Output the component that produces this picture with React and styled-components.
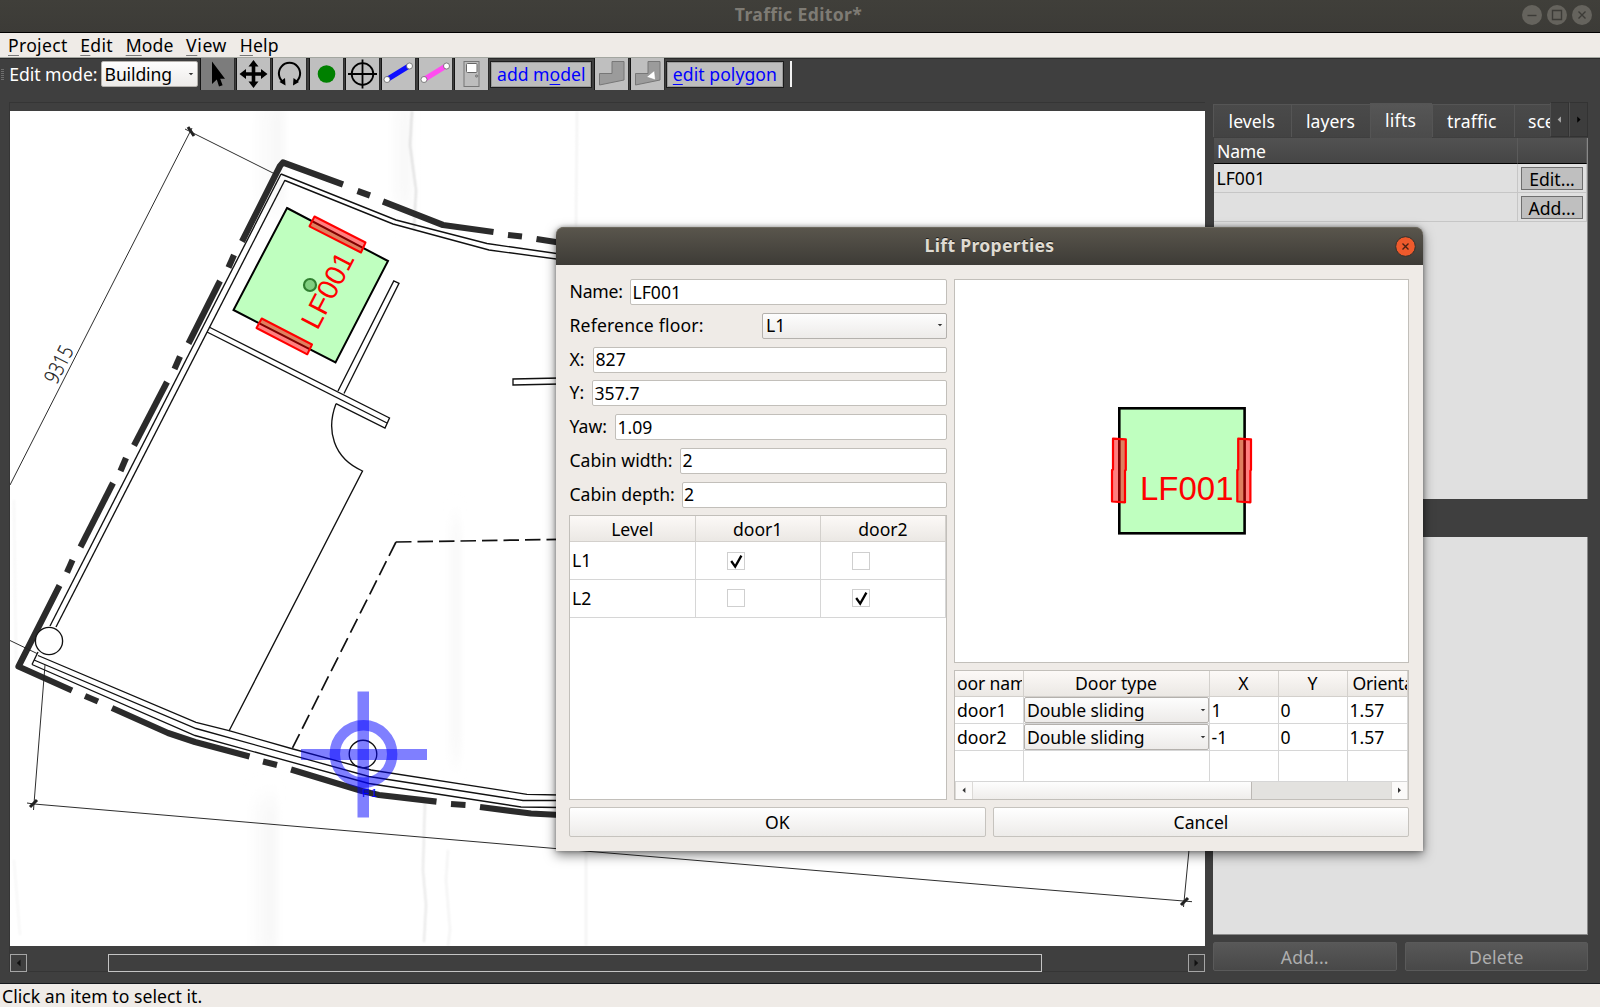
import React from "react";
import styled, { createGlobalStyle, css } from "styled-components";

const Global = createGlobalStyle`
  * { box-sizing: border-box; }
  body { margin: 0; overflow: hidden; }
`;

const Window = styled.div`
  position: relative;
  width: 1600px;
  height: 1007px;
  display: flex;
  flex-direction: column;
  overflow: hidden;
  background: #3f3f3f;
  color: #000;
  font-family: "Noto Sans", "Open Sans", sans-serif;
  font-size: 17.6px;
  line-height: 24px;
  white-space: nowrap;
`;

/* ---------- window chrome ---------- */

const TitleBar = styled.header`
  height: 33px;
  flex: none;
  display: grid;
  grid-template-columns: 1fr auto 1fr;
  align-items: start;
  padding: 2px 8px 0 5px;
  background: linear-gradient(#403f3a, #3c3b37);
  border-bottom: 1px solid #000;
`;

const TitleText = styled.h1`
  grid-column: 2;
  margin: 0;
  font-size: 17.6px;
  line-height: 24px;
  font-weight: 700;
  letter-spacing: 0.35px;
  color: #7e7b74;
`;

const WindowButtons = styled.div`
  justify-self: end;
  display: flex;
  gap: 5px;
  padding-top: 2.5px;
`;

const MenuBar = styled.nav`
  height: 25px;
  flex: none;
  display: flex;
  gap: 12.7px;
  padding-left: 8px;
  background: #efebe7;
  border-bottom: 1px solid #a3a6a0;
`;

const MenuItem = styled.span`
  letter-spacing: ${(p) => p.$track || 0}px;
`;

const Mnemonic = styled.span`
  text-decoration: underline;
  text-decoration-thickness: 1px;
  text-underline-offset: 3px;
  text-decoration-color: ${(p) => p.$color || "#777"};
`;

/* ---------- toolbar ---------- */

const Toolbar = styled.div`
  height: 44px;
  flex: none;
  display: flex;
  align-items: flex-start;
  gap: 3.3px;
  padding-left: 2px;
  box-shadow: inset 0 1px 0 #2a2a2a;
`;

const Grip = styled.span`
  width: 3px;
  height: 12px;
  margin: 11px 2px 0 -1px;
  background: repeating-linear-gradient(#6e6e6e 0 1px, #3f3f3f 1px 2px);
`;

const ToolLabel = styled.span`
  width: 88px;
  padding-top: 4px;
  color: #fff;
  letter-spacing: -0.05px;
`;

const comboFace = css`
  display: flex;
  align-items: center;
  justify-content: space-between;
  border: 1px solid #b4b1ad;
  border-radius: 2px;
  background: linear-gradient(#fdfdfd, #edebe9);
`;

const Combo = styled.div`
  ${comboFace}
  width: ${(p) => p.$w}px;
  height: 26px;
  padding: 0 ${(p) => p.$pr || 3}px 1px ${(p) => p.$pl || 3}px;
  margin-top: ${(p) => p.$mt || 0}px;
  letter-spacing: ${(p) => p.$track || 0}px;
`;

const ToolButton = styled.button`
  width: 33px;
  height: 32px;
  flex: none;
  padding: 0;
  border: 0;
  display: block;
  background: ${(p) => (p.$active ? "#7c7c7c" : "#bfbfbf")};
  box-shadow: -1px 0 0 #151515, 1px 0 0 #2b2b2b;
`;

const TextTool = styled.button`
  width: ${(p) => p.$w}px;
  height: 25px;
  flex: none;
  margin: 4px 0 0;
  padding: 0;
  border: 1px solid #9a9a9a;
  background: #bdbdbd;
  box-shadow: 0 0 0 1px #1c1c1c;
  color: #0000ff;
  font: inherit;
  line-height: 21px;
  letter-spacing: ${(p) => p.$track || 0}px;
`;

const ToolSeparator = styled.span`
  width: 2px;
  height: 26px;
  margin: 3px 0 0 4px;
  background: #f2f2f2;
`;

/* ---------- workspace ---------- */

const Workspace = styled.main`
  height: 881px;
  flex: none;
  display: flex;
  gap: 8px;
  padding: 0 12px 0 9px;
`;

const CanvasPane = styled.section`
  width: 1196px;
  height: 870px;
  display: flex;
  flex-direction: column;
  border: 1px solid #353535;
  border-right: 0;
  padding-top: 8px;
`;

const PlanView = styled.div`
  width: 1195px;
  height: 835px;
  flex: none;
  background: #fff;
  svg { display: block; }
`;

const CanvasScroll = styled.div`
  display: flex;
  width: 1194.5px;
  height: 18px;
  margin-top: 7.5px;
`;

const ScrollArrow = styled.span`
  width: 17px;
  height: 18px;
  display: grid;
  place-items: center;
  border: 1px solid #a5a5a5;
`;

const ScrollThumb = styled.span`
  width: 934px;
  margin: 0 auto 0 81px;
  border: 1px solid #c4c4c4;
`;

const SidePane = styled.aside`
  width: 375px;
  height: 870px;
  display: flex;
  flex-direction: column;
`;

const Tabs = styled.div`
  height: 36px;
  display: flex;
  align-items: flex-end;
  overflow: hidden;
`;

const Tab = styled.span`
  width: ${(p) => p.$w}px;
  height: ${(p) => (p.$active ? 35 : 33)}px;
  flex: none;
  overflow: hidden;
  margin-bottom: ${(p) => (p.$active ? 0 : 1)}px;
  padding: 3.5px 0 0 ${(p) => p.$pl || 14}px;
  color: #fff;
  background: ${(p) => (p.$active ? "linear-gradient(#565656,#4b4b4b)" : "linear-gradient(#4a4a4a,#434343)")};
  border: 1px solid #555;
  border-width: 1px 0 0 1px;
  letter-spacing: ${(p) => p.$track || 0}px;
`;

const TabScroll = styled.span`
  width: 19px;
  height: 35px;
  display: grid;
  place-items: center;
  margin-bottom: 1px;
  background: #3d3d3d;
  border: 1px solid #333;
  border-left-color: #505050;
`;

const LiftTable = styled.div`
  height: 361px;
  display: grid;
  grid-template-columns: 304px 69px;
  grid-template-rows: 26px 29px 29px;
  margin-left: 1px;
  background: #e0e0e0;
  border-right: 1px solid #888;
`;

const LiftHead = styled.div`
  padding: 0.6px 0 0 3px;
  color: #fff;
  background: linear-gradient(#525252, #454545);
  border-bottom: 1px solid #000;
  border-right: 1px solid #5b5b5b;
  letter-spacing: -0.2px;
`;

const LiftCell = styled.div`
  padding: 2px 0 0 ${(p) => p.$pl ?? 2.5}px;
  border: 1px solid #c6c6c6;
  border-width: 0 1px 1px 0;
`;

const CellButton = styled.button`
  display: block;
  width: 62px;
  height: 23px;
  margin: 1px 0 0 0;
  padding: 0;
  border: 1px solid #6f6f6f;
  background: #bfbfbf;
  font: inherit;
  line-height: 20px;
`;

const EmptyList = styled.div`
  height: 398px;
  margin-top: 38px;
  background: #e0e0e0;
  border: 1px solid #8a8a8a;
  border-width: 0 1px 1px 0;
`;

const SideActions = styled.div`
  display: grid;
  grid-template-columns: 1fr 1fr;
  gap: 8px;
  margin-top: 7px;
`;

const SideButton = styled.button`
  height: 29px;
  padding: 0;
  border: 1px solid #5a5a5a;
  border-radius: 2px;
  background: linear-gradient(#585858, #484848);
  color: #aeaeae;
  font: inherit;
  line-height: 26px;
  letter-spacing: 0.15px;
`;

const StatusBar = styled.footer`
  flex: 1;
  padding-left: 2px;
  background: #efebe7;
  border-top: 1px solid #15181c;
  line-height: 24px;
  letter-spacing: 0.04px;
`;

/* ---------- dialog ---------- */

const Dialog = styled.section`
  position: absolute;
  left: 556px;
  top: 227px;
  width: 867px;
  height: 624px;
  border-radius: 8px 8px 0 0;
  background: #efebe7;
  box-shadow: 0 4px 12px rgba(0, 0, 0, 0.5), 0 0 4px rgba(0, 0, 0, 0.35);
  display: flex;
  flex-direction: column;
`;

const DialogTitle = styled.header`
  height: 38px;
  flex: none;
  display: grid;
  grid-template-columns: 1fr auto 1fr;
  align-items: center;
  padding-right: 7.5px;
  border-radius: 8px 8px 0 0;
  background: linear-gradient(#5a564d, #3d3b36);
  box-shadow: inset 0 1px 0 #6c685d;

  h2 {
    grid-column: 2;
    margin: 0 0 2px 7.5px;
    font-size: 17.6px;
    font-weight: 700;
    letter-spacing: 0.3px;
    color: #dfdbd2;
    text-shadow: 0 -1px 0 #22211e;
  }
  svg { justify-self: end; }
`;

const DialogBody = styled.div`
  display: grid;
  grid-template-columns: 378px 455px;
  column-gap: 7px;
  padding: 14px 0 0 13px;
`;

const Form = styled.div`
  height: 521px;
  display: flex;
  flex-direction: column;
`;

const Field = styled.label`
  height: 26px;
  flex: none;
  margin-bottom: 7.8px;
  display: flex;
  justify-content: space-between;
`;

const FieldLabel = styled.span`
  padding-left: 0.5px;
  letter-spacing: ${(p) => p.$track || 0}px;
`;

const TextBox = styled.input`
  width: ${(p) => p.$w}px;
  height: 26px;
  padding: 0 0 1px 1.5px;
  border: 1px solid #c2bfba;
  border-radius: 2px;
  background: #fff;
  color: #000;
  font: inherit;
  outline: 0;
`;

const frame = css`
  border: 1px solid #c2bfba;
  background: #fff;
`;

const LevelTable = styled.div`
  ${frame}
  flex: 1;
  margin-top: -0.8px;
  display: grid;
  grid-template-columns: 125.5px 125.3px 1fr;
  grid-template-rows: 26.5px 37.5px 38px;
`;

const Head = styled.div`
  overflow: hidden;
  text-align: ${(p) => p.$align || "center"};
  padding: ${(p) => p.$pt || 0}px 0 0 ${(p) => p.$pl || 0}px;
  background: linear-gradient(#fcf9f7, #ebe8e4);
  border: 1px solid #d3d0cc;
  border-width: 0 1px 1px 0;
  letter-spacing: ${(p) => p.$track || 0}px;
`;

const HeadClip = styled.span`
  display: block;
  width: ${(p) => p.$w}px;
  overflow: hidden;
`;

const Cell = styled.div`
  overflow: hidden;
  padding: ${(p) => p.$pt || 0}px 0 0 ${(p) => p.$pl ?? 2}px;
  border: 1px solid #d6d6d6;
  border-width: 0 1px 1px 0;
  letter-spacing: ${(p) => p.$track || 0}px;
`;

const Check = styled.span`
  display: block;
  width: 18px;
  height: 18px;
  border: 1px solid #cfcfcf;
  background: #fff;
  svg { display: block; }
`;

const RightColumn = styled.div`
  display: flex;
  flex-direction: column;
  gap: 7px;
`;

const Preview = styled.div`
  ${frame}
  height: 384px;
  svg { display: block; }
`;

const DoorPanel = styled.div`
  ${frame}
  height: 130px;
  overflow: hidden;
`;

const DoorTable = styled.div`
  display: grid;
  width: 453px;
  grid-template-columns: 68.5px 186px 69px 69px 60.5px;
  grid-template-rows: 26px 27px 27px 31px;
`;

const DoorScroll = styled.div`
  height: 17px;
  display: flex;
  background: #e3e2df;
`;

const DoorArrow = styled.span`
  width: 17.5px;
  display: grid;
  place-items: center;
  background: #fbfaf9;
  border: solid #dcdad7;
  border-width: 0 1px;
`;

const DoorThumb = styled.span`
  width: 279px;
  margin-right: auto;
  background: linear-gradient(#fdfdfd, #efedeb);
  border-right: 1px solid #bbb8b4;
`;

const DialogActions = styled.div`
  display: grid;
  grid-template-columns: 416.5px 416px;
  gap: 7.5px;
  padding: 7px 0 0 13px;
`;

const DialogButton = styled.button`
  height: 30px;
  padding: 0;
  border: 1px solid #c6c3be;
  border-radius: 2px;
  background: linear-gradient(#fff, #edebe9);
  font: inherit;
  line-height: 27px;
`;

/* ---------- drawings ---------- */

const Arrow = ({ dir, color = "#111", s = 1 }) => (
  <svg width={8 * s} height={8 * s} viewBox="0 0 8 8">
    <path
      fill={color}
      d={dir === "left" ? "M5.5 0.5v7L1.8 4z" : dir === "right" ? "M2.5 0.5v7L6.2 4z" : "M1 2.6h6L4 5.6z"}
    />
  </svg>
);

const ChromeButton = ({ children }) => (
  <svg width="20" height="20" viewBox="0 0 20 20">
    <circle cx="10" cy="10" r="10" fill="#65635d" />
    <g fill="none" stroke="#3c3b37" strokeWidth="1.4">{children}</g>
  </svg>
);

const Tool = ({ children, active }) => (
  <ToolButton $active={active}>
    <svg width="33" height="32" viewBox="0 0 33 32">{children}</svg>
  </ToolButton>
);

const Edge = ({ color }) => (
  <>
    <path d="M5 21.5L27 8" stroke={color} strokeWidth="5" />
    <circle cx="5" cy="21.5" r="3" fill="#fff" stroke="#555" strokeWidth=".7" />
    <circle cx="27.5" cy="8" r="3" fill="#fff" stroke="#555" strokeWidth=".7" />
  </>
);

const CheckBox = ({ on }) => (
  <Check>
    {on && (
      <svg width="16" height="16" viewBox="0 0 16 16">
        <path d="M3.2 8L7.2 13.6L13.4 2.6" fill="none" stroke="#000" strokeWidth="2.3" />
      </svg>
    )}
  </Check>
);

const heavyWalls = [
  "M343 184.5L283 162.5L280 166L242 241.5",
  "M357.5 191L370 195.5",
  "M383 201.5L443 225L493.5 232",
  "M508 235L522 236.5",
  "M536.5 239L562 243",
  "M234 255L228.5 267.5",
  "M220 281L188.5 343.5",
  "M180 356.5L174.5 369",
  "M167 382L134 445.5",
  "M126 458L120.5 471",
  "M113 483L80.5 547",
  "M72.5 560L67 572.5",
  "M59.5 585.5L18.5 666.5L72 690.5",
  "M85 696L98 701.5",
  "M112 708L168 733L195 742L249.5 756.5",
  "M263 761.5L277 765",
  "M291 769.5L362 791L379 795L436.5 801.7",
  "M451 804L465.5 805",
  "M480 807L531 813.5L560 815",
];

const thinWalls = [
  "M281 174L396 220L487 243.5L560 254",
  "M285 180.5L393 224L489 250L560 259.5",
  "M281 174L50 626",
  "M285 180L56 627",
  "M209 327L389.5 418L385 428L336 403.7",
  "M207 332L387 423",
  "M338 391L393.8 281L399 283.3L344 393.5",
  "M336 403.7C326 430 333 458 362.5 471L229 731",
  "M560 378L513 379V385L560 384",
  "M38 655.5L196 722.3L229 730.7L293 749L371 770L527 794.3L560 795",
  "M34 660L196 728.5L369 776.5L523 800.5L560 800.5",
  "M32 664.5L195 735.5L369 783.5L521 807L560 807.5",
  "M32 664.5L38 652",
];

const FloorPlan = () => (
  <svg width="1195" height="835" viewBox="10 111 1195 835">
    <defs>
      <linearGradient id="fold">
        <stop offset="0" stopColor="#f6f6f6" stopOpacity="0" />
        <stop offset=".8" stopColor="#f7f7f7" />
        <stop offset="1" stopColor="#f9f9f9" stopOpacity="0" />
      </linearGradient>
      <filter id="soft"><feGaussianBlur stdDeviation="1.1" /></filter>
      <filter id="wide" x="-50%" width="200%"><feGaussianBlur stdDeviation="3 12" /></filter>
    </defs>
    <g filter="url(#wide)">
      <rect x="250" y="100" width="38" height="110" fill="url(#fold)" />
      <rect x="245" y="800" width="36" height="160" fill="url(#fold)" />
      <rect x="446" y="520" width="16" height="240" fill="url(#fold)" />
      <rect x="385" y="100" width="29" height="110" fill="url(#fold)" />
    </g>
    <g fill="none" stroke="#dcdcdc" strokeWidth="1.4" filter="url(#soft)">
      <path d="M412 111L410 145L416 190L414 230" stroke="#cfcfcf" />
      <path d="M425 800L423 870L426 905L424 942" />
      <path d="M448 850L446 880L450 930L448 946" stroke="#ececec" />
      <path d="M577 111L576 226M586 850V946" stroke="#ececec" />
      <path d="M14 500L16 660M14 860L20 935" stroke="#f2f2f2" />
    </g>

    <g fill="none" stroke="#2b2b2b" strokeWidth="6.2" strokeLinejoin="round">
      {heavyWalls.map((d) => <path key={d} d={d} />)}
    </g>
    <g fill="none" stroke="#111" strokeWidth="1.35">
      {thinWalls.map((d) => <path key={d} d={d} />)}
      <path d="M396 542L560 539.4" strokeWidth="1.7" strokeDasharray="15.5 6" />
      <path d="M396 542L292 749" strokeWidth="1.7" strokeDasharray="15.5 6" />
      <circle cx="49" cy="641" r="13.6" fill="#fff" />
      <circle cx="363" cy="754" r="13.8" />
    </g>
    <g fill="none" stroke="#222" strokeWidth=".95">
      <path d="M275 174L185 129M192 128L10 485" />
      <path d="M10 640.5L37 653.5M45 665L33.5 810" />
      <path d="M27 803L34 804L555 848.5L1000 886L1192 901.7M1189 850L1183.5 907" />
      <path d="M188 127L194 136M30 807L37 800M1181 905L1188 898" strokeWidth="3" />
    </g>
    <text
      transform="translate(56.5 385) rotate(-63)"
      textLength="39"
      lengthAdjust="spacingAndGlyphs"
      fontFamily="Open Sans, sans-serif"
      fontWeight="300"
      fontSize="21"
      fill="#111"
      stroke="#111"
      strokeWidth=".25"
    >
      9315
    </text>

    <path d="M287 208L388 261L335.5 362.5L233.5 310Z" fill="#bfffbf" stroke="#000" strokeWidth="2" />
    <g fill="#f00" fillOpacity=".5" stroke="#f00" strokeWidth="2" strokeLinejoin="round">
      <path d="M314.5 216.5L365.5 242.5L361 252.5L309.5 226.3Z" />
      <path d="M261.7 318.5L312 344.5L307.3 354.3L256.5 328Z" />
    </g>
    <circle cx="310" cy="285" r="6" fill="#80cf80" stroke="#307f30" strokeWidth="2.2" />
    <text
      transform="translate(317.5 331) rotate(-62.5)"
      fontFamily="Liberation Sans, Arial, sans-serif"
      fontSize="28.8"
      fill="#f00"
    >
      LF001
    </text>

    <g fill="#00f" fillOpacity=".5">
      <rect x="357.5" y="691.5" width="11.5" height="126" />
      <rect x="301" y="749" width="126" height="11" />
    </g>
    <circle cx="363.5" cy="754" r="28.7" fill="none" stroke="#00f" strokeOpacity=".5" strokeWidth="10.4" />
    <text x="362" y="796.5" fontFamily="Liberation Sans, Arial, sans-serif" fontSize="11.5" letterSpacing="2" fill="#00f">
      F1
    </text>
  </svg>
);

const LiftPreview = () => (
  <svg width="453" height="382" viewBox="955 280 453 382">
    <rect x="1119.3" y="408.3" width="125.3" height="125" fill="#bfffbf" stroke="#000" strokeWidth="2.6" />
    <g fill="#f00" fillOpacity=".5" stroke="#f00" strokeWidth="2.2" strokeLinejoin="round">
      <path d="M1113 438.7L1125.8 439.3V470L1125 470.5V502.3L1112 501.5V470L1113 469.5Z" />
      <path d="M1238.2 438.7L1251 439.3V470L1250.4 470.5V502.3L1237.3 501.5V470L1238.2 469.5Z" />
    </g>
    <text x="1140" y="500" fontFamily="Liberation Sans, Arial, sans-serif" fontSize="33" fill="#f00">
      LF001
    </text>
  </svg>
);

/* ---------- data ---------- */

const menus = [
  ["P", "roject", 0.3],
  ["E", "dit", 0.3],
  ["M", "ode", 0.1],
  ["V", "iew", 0.6],
  ["H", "elp", 0.15],
];

const fields = [
  { label: "Name:", value: "LF001", w: 317, track: -0.2 },
  { label: "Reference floor:", value: "L1", combo: true, track: 0.17 },
  { label: "X:", value: "827", w: 354 },
  { label: "Y:", value: "357.7", w: 355 },
  { label: "Yaw:", value: "1.09", w: 332 },
  { label: "Cabin width:", value: "2", w: 267 },
  { label: "Cabin depth:", value: "2", w: 265.5 },
];

const levels = [
  { name: "L1", doors: [true, false] },
  { name: "L2", doors: [false, true] },
];

const doors = [
  { name: "door1", type: "Double sliding", x: "1", y: "0", yaw: "1.57" },
  { name: "door2", type: "Double sliding", x: "-1", y: "0", yaw: "1.57" },
];

export default function App() {
  return (
    <Window>
      <Global />
      <TitleBar>
        <TitleText>Traffic Editor*</TitleText>
        <WindowButtons>
          <ChromeButton><path d="M5.5 10.5h9" /></ChromeButton>
          <ChromeButton><path d="M5.5 5.5h9v9h-9z" /></ChromeButton>
          <ChromeButton><path d="M6.5 6.5l7 7M13.5 6.5l-7 7" /></ChromeButton>
        </WindowButtons>
      </TitleBar>

      <MenuBar>
        {menus.map(([key, rest, track]) => (
          <MenuItem key={key} $track={track}><Mnemonic>{key}</Mnemonic>{rest}</MenuItem>
        ))}
      </MenuBar>

      <Toolbar>
        <Grip />
        <ToolLabel>Edit mode:</ToolLabel>
        <Combo $w={97} $mt={3} $track={-0.15}>Building<Arrow dir="down" color="#333" s={0.75} /></Combo>
        <Tool active>
          <path d="M11 3.5V26l4.8-4.6L18 28.5l3.6-1.2-2.4-6.5H24z" fill="#000" />
        </Tool>
        <Tool>
          <path d="M16.5 6V26M6 16H27" stroke="#000" strokeWidth="3.6" />
          <path d="M16.5 2l5 6.5h-10zM16.5 30l5-6.5h-10zM2.5 16L9 11v10zM30.5 16L24 11v10z" fill="#000" />
        </Tool>
        <Tool>
          <path d="M11 24.5A10.6 10.6 0 1 1 22 24.5" fill="none" stroke="#000" strokeWidth="2" />
          <path d="M12.5 27.5L6.5 24l5.5-4zM20 27.5l6-3.5-5.5-4z" fill="#000" />
        </Tool>
        <Tool><circle cx="16.5" cy="16" r="8.8" fill="#008000" /></Tool>
        <Tool>
          <circle cx="16.5" cy="16" r="10.8" fill="none" stroke="#000" strokeWidth="1.8" />
          <path d="M16.5 1.5V30.5M2 16H31" stroke="#000" strokeWidth="1.8" />
        </Tool>
        <Tool><Edge color="#0d0dff" /></Tool>
        <Tool><Edge color="#ff4df0" /></Tool>
        <Tool>
          <rect x="9" y="3.5" width="15" height="25" fill="#bdbdbd" stroke="#777" />
          <rect x="11.5" y="5.5" width="10.5" height="9" rx="1" fill="#fff" stroke="#666" />
          <circle cx="21.6" cy="18" r="1.2" fill="#999" stroke="#666" strokeWidth=".6" />
        </Tool>
        <TextTool $w={100}>add m<Mnemonic $color="#00f">o</Mnemonic>del</TextTool>
        <Tool><path d="M4.5 15.5H17V3.5H29V22L4.5 27z" fill="#9b9b9b" stroke="#777" /></Tool>
        <Tool>
          <path d="M4.5 15.5H17V3.5H29V22L4.5 27z" fill="#9b9b9b" stroke="#777" />
          <path d="M23.5 12.5L24.5 22L15.5 19z" fill="#fff" stroke="#888" strokeWidth=".6" />
        </Tool>
        <TextTool $w={115.5} $track={0.05}><Mnemonic $color="#00f">e</Mnemonic>dit polygon</TextTool>
        <ToolSeparator />
      </Toolbar>

      <Workspace>
        <CanvasPane>
          <PlanView><FloorPlan /></PlanView>
          <CanvasScroll>
            <ScrollArrow><Arrow dir="left" /></ScrollArrow>
            <ScrollThumb />
            <ScrollArrow><Arrow dir="right" /></ScrollArrow>
          </CanvasScroll>
        </CanvasPane>

        <SidePane>
          <Tabs>
            <Tab $w={78} $pl={14.5} $track={0.1}>levels</Tab>
            <Tab $w={79}>layers</Tab>
            <Tab $w={62} $active $track={0.25}>lifts</Tab>
            <Tab $w={82} $track={0.2}>traffic</Tab>
            <Tab $w={36} $pl={13}>sce</Tab>
            <TabScroll><Arrow dir="left" color="#aaa" s={0.9} /></TabScroll>
            <TabScroll><Arrow dir="right" color="#000" s={0.9} /></TabScroll>
          </Tabs>
          <LiftTable>
            <LiftHead>Name</LiftHead>
            <LiftHead />
            <LiftCell>LF001</LiftCell>
            <LiftCell $pl={3}><CellButton>Edit...</CellButton></LiftCell>
            <LiftCell />
            <LiftCell $pl={3}><CellButton>Add...</CellButton></LiftCell>
          </LiftTable>
          <EmptyList />
          <SideActions>
            <SideButton>Add...</SideButton>
            <SideButton>Delete</SideButton>
          </SideActions>
        </SidePane>
      </Workspace>

      <StatusBar>Click an item to select it.</StatusBar>

      <Dialog>
        <DialogTitle>
          <h2>Lift Properties</h2>
          <svg width="21" height="21" viewBox="0 0 21 21">
            <circle cx="10.5" cy="10.5" r="9.8" fill="#ee5a2c" stroke="#33312c" />
            <path d="M7.5 7.5l6 6M13.5 7.5l-6 6" stroke="#4a2013" strokeWidth="1.4" />
          </svg>
        </DialogTitle>

        <DialogBody>
          <Form>
            {fields.map((f) => (
              <Field key={f.label}>
                <FieldLabel $track={f.track}>{f.label}</FieldLabel>
                {f.combo
                  ? <Combo $w={185}>{f.value}<Arrow dir="down" color="#333" s={0.75} /></Combo>
                  : <TextBox $w={f.w} defaultValue={f.value} />}
              </Field>
            ))}
            <LevelTable>
              <Head $pt={1}>Level</Head>
              <Head $pt={1}>door1</Head>
              <Head $pt={1}>door2</Head>
              {levels.map((l) => (
                <React.Fragment key={l.name}>
                  <Cell $pt={6}>{l.name}</Cell>
                  {l.doors.map((on, i) => (
                    <Cell key={i} $pt={9.3} $pl={31}><CheckBox on={on} /></Cell>
                  ))}
                </React.Fragment>
              ))}
            </LevelTable>
          </Form>

          <RightColumn>
            <Preview><LiftPreview /></Preview>
            <DoorPanel>
              <DoorTable>
                <Head $align="left" $pl={2} $track={-0.15}><HeadClip $w={64.5}>oor nam</HeadClip></Head>
                <Head>Door type</Head>
                <Head>X</Head>
                <Head>Y</Head>
                <Head $align="left" $pl={5} $track={-0.2}>Orienta</Head>
                {doors.map((d) => (
                  <React.Fragment key={d.name}>
                    <Cell $pt={1}>{d.name}</Cell>
                    <Cell $pl={0}>
                      <Combo $w={185} $pr={2} $pl={2.5} $track={-0.1}>
                        {d.type}<Arrow dir="down" color="#333" s={0.75} />
                      </Combo>
                    </Cell>
                    <Cell $pt={1}>{d.x}</Cell>
                    <Cell $pt={1}>{d.y}</Cell>
                    <Cell $pt={1}>{d.yaw}</Cell>
                  </React.Fragment>
                ))}
                <Cell /><Cell /><Cell /><Cell /><Cell />
              </DoorTable>
              <DoorScroll>
                <DoorArrow><Arrow dir="left" color="#333" s={0.8} /></DoorArrow>
                <DoorThumb />
                <DoorArrow><Arrow dir="right" color="#333" s={0.8} /></DoorArrow>
              </DoorScroll>
            </DoorPanel>
          </RightColumn>
        </DialogBody>

        <DialogActions>
          <DialogButton>OK</DialogButton>
          <DialogButton>Cancel</DialogButton>
        </DialogActions>
      </Dialog>
    </Window>
  );
}
